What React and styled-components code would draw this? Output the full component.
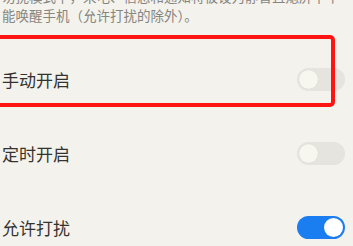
import React from "react";
import styled, { createGlobalStyle } from "styled-components";

const GlobalStyle = createGlobalStyle`
  html, body {
    margin: 0;
    padding: 0;
    background: #f3f2ec;
  }
`;

const Page = styled.div`
  width: 353px;
  height: 246px;
  overflow: hidden;
  background: #f3f2ec;
  font-family: "Noto Sans CJK SC", "Noto Sans", sans-serif;
  padding-left: 2px;
  padding-right: 8px;
  box-sizing: border-box;
`;

const Desc = styled.p`
  margin: -13px 0 0 0;
  font-size: 13.5px;
  line-height: 19px;
  color: #868580;
  white-space: nowrap;
`;

const List = styled.div`
  display: flex;
  flex-direction: column;
  margin-top: 17px;
`;

const Row = styled.div`
  position: relative;
  height: 74px;
  display: flex;
  align-items: center;
  justify-content: space-between;
`;

const Label = styled.span`
  font-size: 17px;
  color: #333330;
`;

const Highlight = styled.div`
  position: absolute;
  top: -7px;
  left: -10px;
  width: 343px;
  height: 72px;
  box-sizing: border-box;
  border: 4px solid #ff1414;
  border-radius: 5px;
  pointer-events: none;
  z-index: 2;
`;

const Track = styled.div`
  position: relative;
  width: 48px;
  height: 23px;
  border-radius: 12px;
  background: ${(p) => (p.$on ? "#1a7ef0" : "#e5e4df")};
  margin-top: ${(p) => p.$dy || 0}px;
`;

const Knob = styled.div`
  position: absolute;
  top: 2px;
  left: ${(p) => (p.$on ? "27px" : "2px")};
  width: 19px;
  height: 19px;
  border-radius: 50%;
  background: ${(p) => (p.$on ? "#ffffff" : "#f7f6ef")};
  box-shadow: 0 0 1px rgba(0, 0, 0, 0.12);
`;

const Toggle = ({ on, dy }) => (
  <Track $on={on} $dy={dy}>
    <Knob $on={on} />
  </Track>
);

const rows = [
  { label: "手动开启", on: false, highlight: true },
  { label: "定时开启", on: false },
  { label: "允许打扰", on: true, dy: 1 },
];

export default function App() {
  return (
    <>
      <GlobalStyle />
      <Page>
        <Desc>
          勿扰模式下，来电、信息和通知将被设为静音且熄屏下不
          <br />
          能唤醒手机（允许打扰的除外）。
        </Desc>
        <List>
          {rows.map((r) => (
            <Row key={r.label}>
              {r.highlight && <Highlight />}
              <Label>{r.label}</Label>
              <Toggle on={r.on} dy={r.dy} />
            </Row>
          ))}
        </List>
      </Page>
    </>
  );
}
